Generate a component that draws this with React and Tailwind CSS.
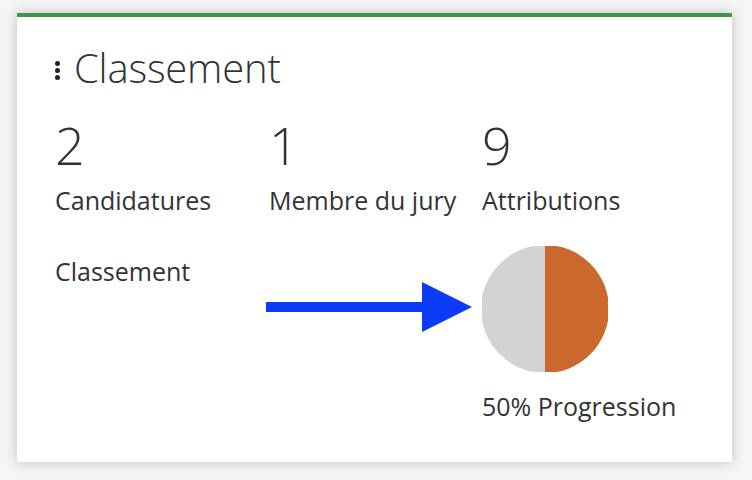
export default function App() {
    const stats = [
        { value: '2', label: 'Candidatures' },
        { value: '1', label: 'Membre du jury' },
        { value: '9', label: 'Attributions' },
    ];

    return (
        <div className="w-[752px] h-[480px] bg-[#f5f5f5] pt-[13px] pl-[17px] font-['Open_Sans',sans-serif] text-[#333]">
            <div className="w-[715px] h-[449px] bg-white border-t-4 border-[#41934f] shadow-[0_0_12px_rgba(0,0,0,0.22)] pt-[31px] pl-[38px]">
                {/* header */}
                <div className="flex items-center h-[40px]">
                    <div className="flex flex-col gap-[2px] mr-[14px] mt-[4px]">
                        <span className="block w-[5px] h-[5px] rounded-full bg-[#222]"></span>
                        <span className="block w-[5px] h-[5px] rounded-full bg-[#222]"></span>
                        <span className="block w-[5px] h-[5px] rounded-full bg-[#222]"></span>
                    </div>
                    <h2 className="text-[40px] leading-[40px] font-light tracking-[-0.2px]">Classement</h2>
                </div>

                {/* stats */}
                <div className="grid grid-cols-[214px_213px_213px] mt-[31px]">
                    {stats.map((s) => (
                        <div key={s.label}>
                            <div className="text-[52px] leading-[52px] font-light">{s.value}</div>
                            <div className="text-[25px] leading-[25px] mt-[17px]">{s.label}</div>
                        </div>
                    ))}
                </div>

                {/* classement row */}
                <div className="grid grid-cols-[214px_213px_213px] mt-[33px]">
                    <div className="text-[25px] leading-[25px] pt-[13px]">Classement</div>
                    <div className="pt-[36px] ml-[-3px]">
                        <svg width="206" height="50" viewBox="0 0 206 50">
                            <rect x="0" y="20" width="158" height="10" fill="#0b3bf4" />
                            <polygon points="156,0 156,50 206,25" fill="#0b3bf4" />
                        </svg>
                    </div>
                    <div>
                        <svg width="126" height="126" viewBox="0 0 126 126">
                            <circle cx="63" cy="63" r="64" fill="#d3d3d3" />
                            <path d="M63 -1 A64 64 0 0 1 63 127 Z" fill="#cb682d" />
                        </svg>
                        <div className="text-[25px] leading-[25px] mt-[22px]">50% Progression</div>
                    </div>
                </div>
            </div>
        </div>
    );
}
